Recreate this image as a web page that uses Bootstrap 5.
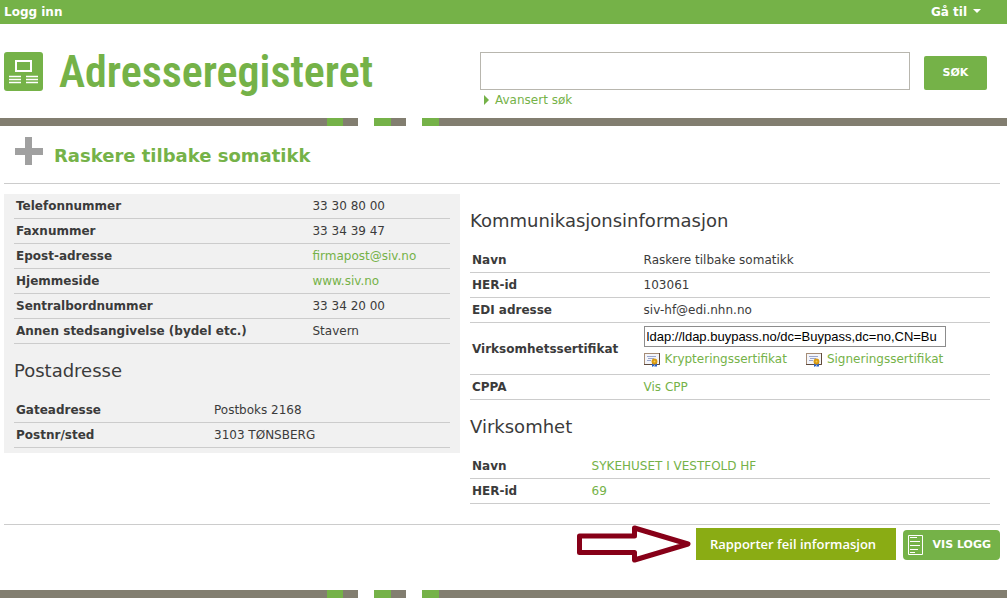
<!DOCTYPE html>
<html lang="no">
<head>
<meta charset="utf-8">
<meta name="viewport" content="width=device-width, initial-scale=1">
<title>Adresseregisteret</title>
<link href="https://cdn.jsdelivr.net/npm/bootstrap@5.3.0/dist/css/bootstrap.min.css" rel="stylesheet">
<style>
:root { --reg-green: #75b248; --reg-grey: #827e70; --reg-line: #ccc; }
body { font: 12px/20px Verdana, "DejaVu Sans", sans-serif; color: #3b3b3b; background: #fff; }
a { color: var(--reg-green); text-decoration: none; }
a:hover { text-decoration: underline; }
.topbar { background: var(--reg-green); height: 24px; padding: 0 26px 0 4px; font-weight: 700; }
.topbar a, .topbar button { color: #fff; }
.topbar button { background: none; border: 0; padding: 0; font-weight: 700; }
.topbar .dropdown-toggle::after { border-width: 4px 4px 0; margin-left: 6px; vertical-align: 3px; }
.masthead { padding: 28px 20px 8px 4px; }
.brand { flex: 476 1 0; min-width: 0; gap: 16px; }
.brand-name { font: 600 44px/40px "Roboto Condensed", Roboto, "Liberation Sans", sans-serif; color: var(--reg-green); }
.search-area { flex: 507 1 0; min-width: 0; }
.search-row { gap: 14px; }
.search-area .form-control { height: 38px; border: 1px solid #b8b6ae; border-radius: 0; }
.btn-search { width: 63px; height: 34px; background: var(--reg-green); color: #fff; font-size: 11px; font-weight: 700; border-radius: 2px; padding: 0; }
.advanced { gap: 5px; }
.stripe { height: 8px; background: linear-gradient(90deg, var(--reg-grey) 327px, var(--reg-green) 327px 343px, var(--reg-grey) 343px 358px, #fff 358px 374px, var(--reg-green) 374px 391px, var(--reg-grey) 391px 406px, #fff 406px 422px, var(--reg-green) 422px 439px, var(--reg-grey) 439px); }
main { padding: 0 7px 0 4px; }
.title-row { height: 58px; padding-left: 11px; gap: 11px; border-bottom: 1px solid var(--reg-line); }
.title-row svg { margin-bottom: 8px; }
h1 { font-size: 18px; line-height: 24px; font-weight: 700; color: var(--reg-green); margin: 2px 0 0; }
h2 { font-size: 18px; line-height: 54px; margin: 0; font-weight: 400; }
.details { padding-top: 10px; padding-bottom: 20px; border-bottom: 1px solid var(--reg-line); }
.contact { flex: 436 1 0; background: #f1f1f1; padding: 0 10px 5px; }
.communication { flex: 520 1 0; padding: 0 10px; }
.facts { width: 100%; table-layout: fixed; }
.facts th, .facts td { padding: 2px; border-bottom: 1px solid var(--reg-line); vertical-align: middle; }
.w-phone { width: 68%; } .w-post { width: 198px; } .w-comm { width: 33%; } .w-org { width: 23%; }
.cert-url { display: block; width: 302px; max-width: 100%; height: 21px; border: 1px solid #8c8c8c; padding: 1px 2px; font: 13px/17px "Liberation Sans", Arial, sans-serif; color: #000; margin: 1px 0; }
.cert-links { gap: 19px; margin-bottom: 2px; }
.cert-link { gap: 5px; line-height: 22px; }
.actions { padding-top: 3px; padding-bottom: 30px; gap: 7px; }
.pointer-arrow { margin: -3px 0; }
.btn-report { width: 200px; height: 32px; background: #8aac14; color: #fff; font: 600 13px/20px "Open Sans", sans-serif; border-radius: 0; padding: 0 6px 0 0; }
.btn-log { width: 97px; height: 30px; background: var(--reg-green); color: #fff; font-size: 11px; line-height: 20px; font-weight: 700; border-radius: 4px; padding: 0 4px; }
</style>
</head>
<body>
<nav class="topbar d-flex justify-content-between align-items-center">
  <a href="#">Logg inn</a>
  <button type="button" class="dropdown-toggle">Gå til</button>
</nav>
<header class="masthead d-flex">
  <div class="brand d-flex align-items-start">
    <svg width="39" height="39" viewBox="0 0 39 39" aria-hidden="true">
      <rect width="39" height="39" rx="3" fill="#75b248"/>
      <rect x="12" y="9" width="15" height="10" fill="none" stroke="#fff" stroke-width="2"/>
      <path d="M5 24.500h12M5 27.500h12M5 30.500h12M22 24.500h12M22 27.500h12M22 30.500h12" stroke="#fff" stroke-width="1.600"/>
    </svg>
    <span class="brand-name">Adresseregisteret</span>
  </div>
  <form class="search-area">
    <div class="search-row d-flex align-items-end">
      <input type="text" class="form-control flex-fill" aria-label="Søk">
      <button type="button" class="btn btn-search flex-shrink-0">SØK</button>
    </div>
    <a href="#" class="advanced d-flex align-items-center ms-1">
      <svg width="6" height="10" viewBox="0 0 6 10" aria-hidden="true"><path d="M0 0L5 5L0 10z" fill="#75b248"/></svg>Avansert søk</a>
  </form>
</header>
<div class="stripe"></div>
<main>
  <div class="title-row d-flex align-items-center">
    <svg width="28" height="28" viewBox="0 0 28 28" aria-hidden="true"><path d="M10 0h7v11h11v7H17v10h-7V18H0v-7h10z" fill="#a0a0a0"/></svg>
    <h1>Raskere tilbake somatikk</h1>
  </div>
  <div class="details d-flex align-items-start">
    <section class="contact">
      <table class="facts">
        <colgroup><col class="w-phone"><col></colgroup>
        <tbody>
        <tr><th scope="row">Telefonnummer</th><td>33 30 80 00</td></tr>
        <tr><th scope="row">Faxnummer</th><td>33 34 39 47</td></tr>
        <tr><th scope="row">Epost-adresse</th><td><a href="#">firmapost@siv.no</a></td></tr>
        <tr><th scope="row">Hjemmeside</th><td><a href="#">www.siv.no</a></td></tr>
        <tr><th scope="row">Sentralbordnummer</th><td>33 34 20 00</td></tr>
        <tr><th scope="row">Annen stedsangivelse (bydel etc.)</th><td>Stavern</td></tr>
        </tbody>
      </table>
      <h2>Postadresse</h2>
      <table class="facts">
        <colgroup><col class="w-post"><col></colgroup>
        <tbody>
        <tr><th scope="row">Gateadresse</th><td>Postboks 2168</td></tr>
        <tr><th scope="row">Postnr/sted</th><td>3103 TØNSBERG</td></tr>
        </tbody>
      </table>
    </section>
    <section class="communication">
      <h2>Kommunikasjonsinformasjon</h2>
      <table class="facts">
        <colgroup><col class="w-comm"><col></colgroup>
        <tbody>
        <tr><th scope="row">Navn</th><td>Raskere tilbake somatikk</td></tr>
        <tr><th scope="row">HER-id</th><td>103061</td></tr>
        <tr><th scope="row">EDI adresse</th><td>siv-hf@edi.nhn.no</td></tr>
        <tr><th scope="row"><label for="cert">Virksomhetssertifikat</label></th><td>
          <input id="cert" type="text" class="cert-url" value="ldap://ldap.buypass.no/dc=Buypass,dc=no,CN=Bu">
          <div class="cert-links d-flex">
            <a href="#" class="cert-link d-flex align-items-center"><svg width="16" height="15" viewBox="0 0 16 15" aria-hidden="true"><rect x=".5" y="1.5" width="15" height="11" fill="#f4f5fa" stroke="#a58c76"/><path d="M0 12.500h15.500V1" fill="none" stroke="#5f4a3c"/><path d="M3 4.500h9M4 6.500h6M3 8.500h4" stroke="#9aa6cc"/><path d="M8 10h2.500v5l-1-1-1.500 1zM11 10h2v5l-1-1-1 1z" fill="#2a62c8"/><circle cx="10.500" cy="9.500" r="2.900" fill="#d99a12"/><circle cx="10.500" cy="9.500" r="1" fill="#f6cf52"/></svg>Krypteringssertifikat</a>
            <a href="#" class="cert-link d-flex align-items-center"><svg width="16" height="15" viewBox="0 0 16 15" aria-hidden="true"><rect x=".5" y="1.5" width="15" height="11" fill="#f4f5fa" stroke="#a58c76"/><path d="M0 12.500h15.500V1" fill="none" stroke="#5f4a3c"/><path d="M3 4.500h9M4 6.500h6M3 8.500h4" stroke="#9aa6cc"/><path d="M8 10h2.500v5l-1-1-1.500 1zM11 10h2v5l-1-1-1 1z" fill="#2a62c8"/><circle cx="10.500" cy="9.500" r="2.900" fill="#d99a12"/><circle cx="10.500" cy="9.500" r="1" fill="#f6cf52"/></svg>Signeringssertifikat</a>
          </div></td></tr>
        <tr><th scope="row">CPPA</th><td><a href="#">Vis CPP</a></td></tr>
        </tbody>
      </table>
      <h2>Virksomhet</h2>
      <table class="facts">
        <colgroup><col class="w-org"><col></colgroup>
        <tbody>
        <tr><th scope="row">Navn</th><td><a href="#">SYKEHUSET I VESTFOLD HF</a></td></tr>
        <tr><th scope="row">HER-id</th><td><a href="#">69</a></td></tr>
        </tbody>
      </table>
    </section>
  </div>
  <div class="actions d-flex justify-content-end align-items-end">
    <svg width="116" height="38" viewBox="0 0 116 38" class="pointer-arrow overflow-visible" aria-hidden="true"><path d="M6.500 11H61.500V3L115 19L61.500 35V27.500H6.500z" fill="#fff" stroke="#870018" stroke-width="5" stroke-linejoin="round"/></svg>
    <button type="button" class="btn btn-report">Rapporter feil informasjon</button>
    <button type="button" class="btn btn-log d-flex align-items-center justify-content-between">
      <svg width="15" height="20" viewBox="0 0 15 20" aria-hidden="true"><path d="M.5.5h14v19H.5zM2 2.500h7M2 6.500h10M2 10.500h10M2 14.500h8M2 17.500h5" fill="none" stroke="#fff"/></svg>
      <span class="me-1">VIS LOGG</span>
    </button>
  </div>
</main>
<div class="stripe"></div>
<script src="https://cdn.jsdelivr.net/npm/bootstrap@5.3.0/dist/js/bootstrap.bundle.min.js"></script>
</body>
</html>
